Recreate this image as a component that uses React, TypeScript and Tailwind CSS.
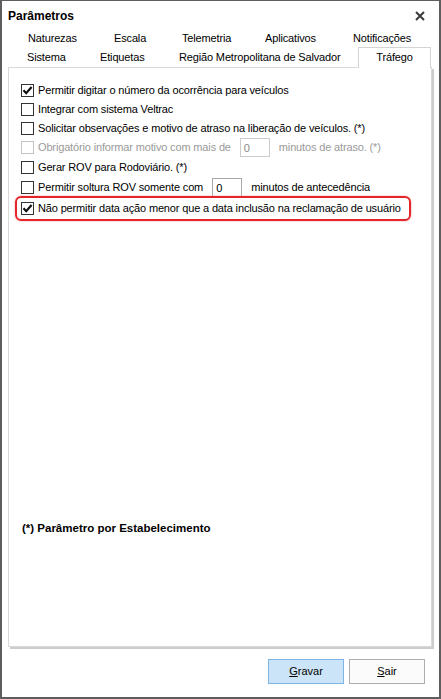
import React from 'react';

type Row = {
    label: string;
    checked?: boolean;
    disabled?: boolean;
};

const CheckBox: React.FC<{ checked?: boolean; disabled?: boolean }> = ({ checked, disabled }) => (
    <span
        className={
            'flex h-[13px] w-[13px] shrink-0 items-center justify-center border bg-white ' +
            (disabled ? 'border-[#c4c4c4]' : 'border-[#333333]')
        }
    >
        {checked && (
            <svg width="11" height="11" viewBox="0 0 11 11">
                <path d="M1.5 5.2 L4.2 8.2 L9.6 2" fill="none" stroke="#111" strokeWidth="2.2" />
            </svg>
        )}
    </span>
);

const NumBox: React.FC<{ disabled?: boolean }> = ({ disabled }) => (
    <span
        className={
            'mx-[5px] flex h-[19px] w-[30px] items-start border px-[3px] pt-[1px] ' +
            (disabled ? 'border-[#cccccc] text-[#8a8a8a]' : 'border-[#a8a8a8] text-[#000]')
        }
    >
        0
    </span>
);

const App: React.FC = () => {
    const rows: Row[] = [
        { label: 'Permitir digitar o número da ocorrência para veículos', checked: true },
        { label: 'Integrar com sistema Veltrac' },
        { label: 'Solicitar observações e motivo de atraso na liberação de veículos. (*)' },
    ];

    return (
        <div
            className="flex h-[699px] w-[441px] flex-col border-2 border-t border-[#5e5e5e] bg-white text-[11px] tracking-[-0.15px] text-black"
            style={{ fontFamily: '"Liberation Sans", Arial, sans-serif' }}
        >
            {/* title */}
            <div className="flex h-[29px] items-center justify-between pl-[6px] pr-[14px]">
                <span className="text-[12px] font-bold tracking-normal">Parâmetros</span>
                <svg width="10" height="10" viewBox="0 0 10 10">
                    <path d="M1 1 L9 9 M9 1 L1 9" stroke="#3a3a3a" strokeWidth="2" />
                </svg>
            </div>

            {/* tabs */}
            <div className="flex h-[17px] items-center pl-[26px]">
                <span className="w-[86px]">Naturezas</span>
                <span className="w-[68px]">Escala</span>
                <span className="w-[83px]">Telemetria</span>
                <span className="w-[88px]">Aplicativos</span>
                <span>Notificações</span>
            </div>
            <div className="flex h-[20px] items-center pl-[25px]">
                <span className="w-[73px]">Sistema</span>
                <span className="w-[79px]">Etiquetas</span>
                <span className="w-[179px]">Região Metropolitana de Salvador</span>
                <span className="relative z-10 mb-[-1px] flex h-[21px] w-[73px] items-center justify-center self-end border border-b-0 border-[#d3d3d3] bg-white pb-[2px]">
                    Tráfego
                </span>
            </div>

            {/* panel */}
            <div className="ml-[6px] flex h-[580px] w-[424px] flex-col border border-[#d9d9d9] shadow-[2px_2px_0_0_#cccccc]">
                <div className="flex flex-col pl-[12px] pt-[13px]">
                    {rows.map((r) => (
                        <div key={r.label} className="flex h-[19px] items-center gap-[4px]">
                            <CheckBox checked={r.checked} />
                            <span>{r.label}</span>
                        </div>
                    ))}
                    <div className="flex h-[19px] items-center gap-[4px] text-[#9a9a9a]">
                        <CheckBox disabled />
                        <span>Obrigatório informar motivo com mais de</span>
                        <NumBox disabled />
                        <span>minutos de atraso. (*)</span>
                    </div>
                    <div className="flex h-[20px] items-center gap-[4px]">
                        <CheckBox />
                        <span>Gerar ROV para Rodoviário. (*)</span>
                    </div>
                    <div className="flex h-[20px] items-center gap-[4px]">
                        <CheckBox />
                        <span>Permitir soltura ROV somente com</span>
                        <NumBox />
                        <span>minutos de antecedência</span>
                    </div>
                </div>
                <div className="ml-[6px] mt-[-1px] flex h-[25px] w-fit items-center gap-[4px] rounded-[6px] border-2 border-[#e4262b] pl-[4px] pr-[8px] shadow-[0_0_2px_#f19a9a]">
                    <CheckBox checked />
                    <span>Não permitir data ação menor que a data inclusão na reclamação de usuário</span>
                </div>

                <div className="mb-[109px] mt-auto pl-[13px] text-[11.5px] font-bold tracking-normal">
                    (*) Parâmetro por Estabelecimento
                </div>
            </div>

            {/* buttons */}
            <div className="mt-[12px] flex justify-end gap-[5px] pr-[14px]">
                <button className="h-[25px] w-[76px] border border-[#7fb4e6] bg-[#cce4f7] text-[11px] tracking-normal">
                    <span className="underline">G</span>ravar
                </button>
                <button className="h-[25px] w-[76px] border border-[#adadad] bg-[#fbfbfb] text-[11px] tracking-normal">
                    <span className="underline">S</span>air
                </button>
            </div>
        </div>
    );
};

export default App;
